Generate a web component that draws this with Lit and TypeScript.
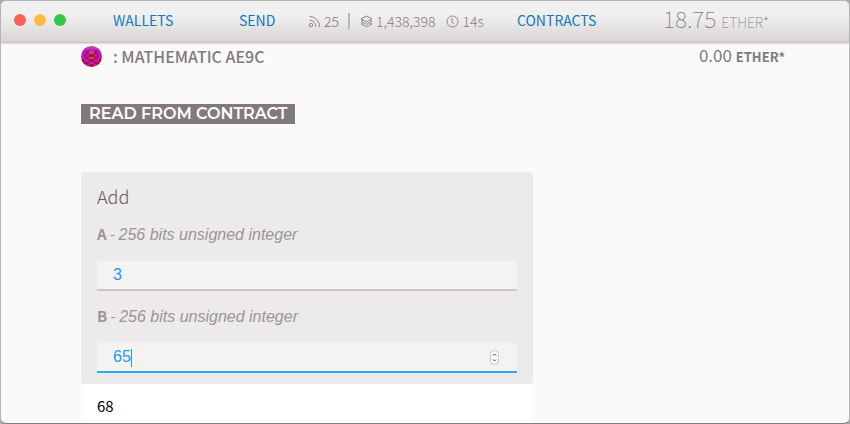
import { LitElement, html, svg, css } from "lit";
import { customElement, state } from "lit/decorators.js";

const IDENTICON = [
  "00111100",
  "00000000",
  "00211200",
  "02022020",
  "00211200",
  "20022002",
  "22200222",
  "02022020",
];
const IDENTICON_COLOURS = ["#c010dc", "#c0409c", "#b0101c"];

@customElement("app-root")
class AppRoot extends LitElement {
  @state() a = "3";
  @state() b = "65";

  static styles = css`
    :host {
      display: block;
      box-sizing: border-box;
      height: 100vh;
      background: #a9a9a9;
      font-family: "Noto Sans CJK SC", "Noto Sans", sans-serif;
      color: #827a7a;
    }
    * {
      box-sizing: border-box;
    }
    .window {
      display: flex;
      flex-direction: column;
      height: 100%;
      overflow: hidden;
      border: 1px solid #b4b4b4;
      border-bottom-color: #808080;
      border-radius: 6px;
      background: #fafafa;
    }
    .bar {
      flex: none;
      display: flex;
      align-items: center;
      height: 41px;
      padding: 0 0 4px 13px;
      background: linear-gradient(#f1f0f0 35%, #d8d4d3);
      box-shadow: 0 1px 2px #b0acac;
      line-height: 24px;
    }
    .lights {
      display: flex;
      gap: 8px;
      width: 99px;
    }
    .light {
      width: 12px;
      height: 12px;
      padding: 0;
      border: 0;
      border-radius: 50%;
    }
    .close {
      background: #fc605b;
    }
    .min {
      background: #fdbc40;
    }
    .max {
      background: #33c748;
    }
    .link {
      color: #0c7cba;
      font-size: 14px;
      text-decoration: none;
    }
    .wallets {
      width: 126px;
    }
    .send {
      width: 69px;
    }
    .stats {
      display: flex;
      align-items: center;
      width: 209px;
      padding-top: 2px;
      font-size: 14px;
      font-weight: 300;
    }
    .stat {
      display: flex;
      align-items: center;
      gap: 3px;
    }
    .divider {
      width: 2px;
      height: 16px;
      margin: 0 10px 0 9px;
      background: #bbb6b6;
    }
    .time {
      margin-left: 11px;
    }
    .icon {
      width: 13px;
      height: 13px;
      margin-top: 2px;
      fill: none;
      stroke: #8d8686;
    }
    .contracts {
      width: 146px;
    }
    .balance {
      font-size: 23px;
      font-weight: 100;
    }
    .unit {
      font-size: 14px;
    }
    .content {
      flex: 1;
      display: flex;
      flex-direction: column;
      padding: 2px 64px 0 80px;
    }
    .account {
      display: flex;
      align-items: center;
      height: 24px;
      line-height: 24px;
    }
    .identicon {
      width: 21px;
      height: 21px;
      margin-right: 11px;
      border-radius: 50%;
    }
    .name {
      flex: 1;
      margin: 0;
      font-size: 16px;
      font-weight: 500;
    }
    .amount {
      font-size: 17px;
    }
    .amount strong {
      font-size: 13px;
    }
    .heading {
      align-self: flex-start;
      margin: 36px 0 48px;
      padding: 0 8px;
      background: #827a7a;
      color: #fff;
      font: 600 16px/20px Montserrat, "Inter", sans-serif;
    }
    .card {
      flex: 1;
      width: 64.2%;
      background: #fff;
    }
    .form {
      padding: 12px 16px 11px;
      border-radius: 2px;
      background: #eceaea;
    }
    .method {
      margin: 0 0 16px;
      color: #625c5c;
      font-size: 18px;
      font-weight: 300;
      line-height: 24px;
    }
    .label {
      display: block;
      margin-bottom: 16px;
      font-size: 15px;
      line-height: 20px;
      color: #9b9696;
    }
    .label em {
      font-family: "Liberation Sans", sans-serif;
      font-size: 16px;
    }
    .field {
      position: relative;
      margin-bottom: 15px;
    }
    .field:last-child {
      margin-bottom: 0;
    }
    .input {
      display: block;
      width: 100%;
      height: 30px;
      padding: 0 16px;
      border: 0;
      border-bottom: 2px solid #ccc6c6;
      border-radius: 0;
      outline: none;
      background: #f4f3f2;
      color: #1f9bee;
      font: 16px "Liberation Sans", sans-serif;
    }
    .input.active {
      border-color: #30a8ee;
    }
    .caret {
      position: absolute;
      left: 34px;
      top: 6px;
      width: 1px;
      height: 18px;
      background: #1f9bee;
    }
    .stepper {
      position: absolute;
      right: 18px;
      top: 7px;
      width: 9px;
      height: 15px;
    }
    .result {
      display: block;
      padding: 10px 16px;
      color: #000;
      font-size: 15px;
      line-height: 24px;
    }
  `;

  render() {
    return html`
      <div class="window">
        <header class="bar">
          <div class="lights">
            <button class="light close" aria-label="Close"></button>
            <button class="light min" aria-label="Minimize"></button>
            <button class="light max" aria-label="Zoom"></button>
          </div>
          <a class="link wallets" href="#wallets">WALLETS</a>
          <a class="link send" href="#send">SEND</a>
          <div class="stats">
            <span class="stat">
              <svg class="icon" viewBox="0 0 13 13">
                <circle cx="3" cy="10" r="1.7" />
                <path d="M1.5 5.2A6.3 6.3 0 0 1 7.8 12M1.5 1.5A10 10 0 0 1 11.5 12" />
              </svg>25</span>
            <span class="divider"></span>
            <span class="stat">
              <svg class="icon" viewBox="0 0 13 13">
                <path d="M6.5 1 12 3.9 6.5 6.8 1 3.9ZM2.8 5.3 1 6.4l5.5 2.9L12 6.4l-1.8-1.1M2.8 7.8 1 8.9l5.5 2.9L12 8.9l-1.8-1.1" />
              </svg>1,438,398</span>
            <span class="stat time">
              <svg class="icon" viewBox="0 0 13 13">
                <circle cx="6.5" cy="6.5" r="5.5" />
                <path d="M6 3v4l2 2" />
              </svg>14s</span>
          </div>
          <a class="link contracts" href="#contracts">CONTRACTS</a>
          <span class="balance">18.75 <span class="unit">ETHER*</span></span>
        </header>
        <main class="content">
          <div class="account">
            <svg class="identicon" viewBox="0 0 8 8" shape-rendering="crispEdges">
              ${IDENTICON.flatMap((row, y) =>
                [...row].map(
                  (c, x) => svg`<rect x=${x} y=${y} width="1" height="1" fill=${IDENTICON_COLOURS[+c]} />`,
                ),
              )}
            </svg>
            <h1 class="name">: MATHEMATIC AE9C</h1>
            <span class="amount">0.00 <strong>ETHER*</strong></span>
          </div>
          <h2 class="heading">READ FROM CONTRACT</h2>
          <section class="card">
            <div class="form">
              <h3 class="method">Add</h3>
              <label class="label" for="a"><b>A</b> - <em>256 bits unsigned integer</em></label>
              <div class="field">
                <input class="input" id="a" inputmode="numeric" .value=${this.a}
                  @input=${(e: any) => (this.a = e.target.value)} />
              </div>
              <label class="label" for="b"><b>B</b> - <em>256 bits unsigned integer</em></label>
              <div class="field">
                <input class="input active" id="b" inputmode="numeric" .value=${this.b}
                  @input=${(e: any) => (this.b = e.target.value)} />
                <span class="caret"></span>
                <svg class="stepper" viewBox="0 0 9 15">
                  <rect x=".5" y=".5" width="8" height="14" rx="4" fill="#fff" stroke="#c9c7c7" />
                  <path d="M3 5.5 4.5 4 6 5.5M3 9.5 4.5 11 6 9.5" fill="none" stroke="#444" />
                </svg>
              </div>
            </div>
            <output class="result" for="a b">${Number(this.a) + Number(this.b)}</output>
          </section>
        </main>
      </div>
    `;
  }
}
